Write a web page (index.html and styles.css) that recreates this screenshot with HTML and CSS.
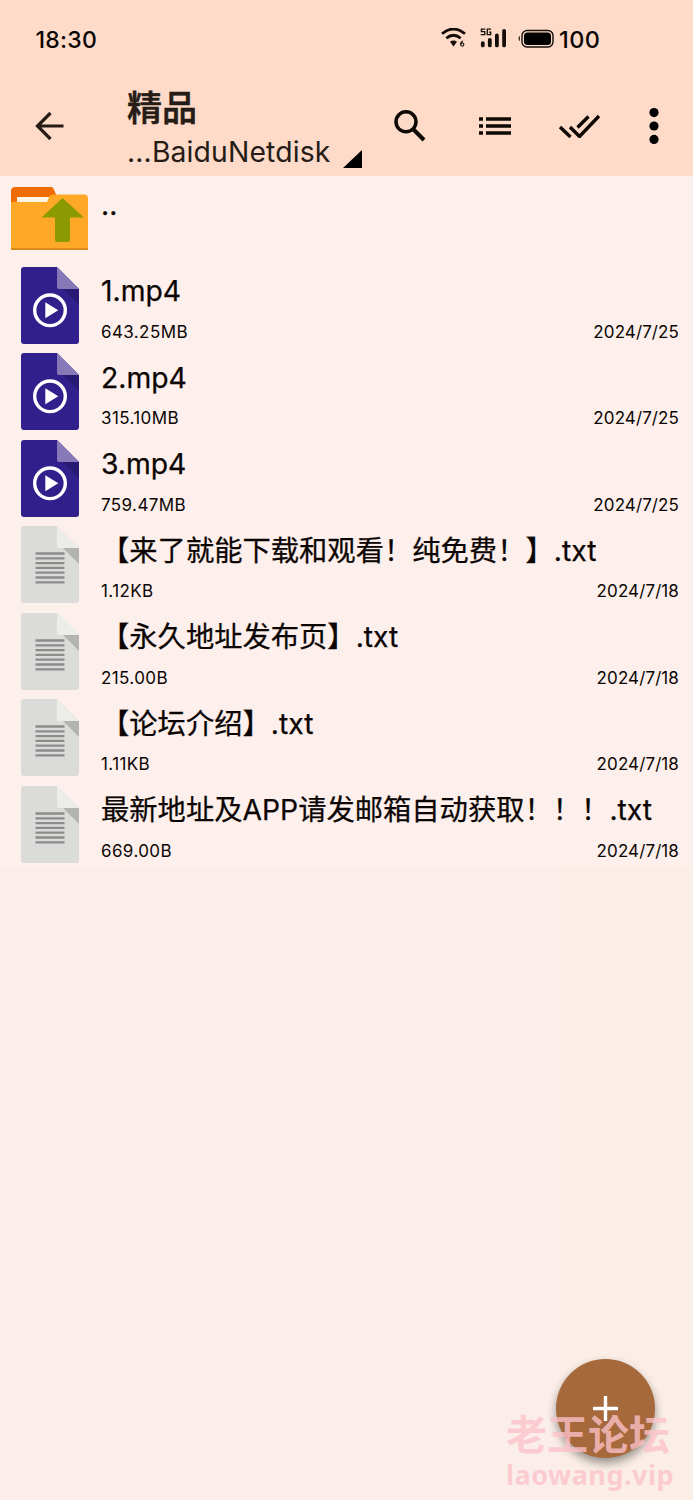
FILE: index.html
```html
<!DOCTYPE html>
<html lang="zh-CN">
<head>
<meta charset="utf-8">
<title>精品</title>
<link rel="stylesheet" href="styles.css">
</head>
<body>
<svg class="defs" width="0" height="0" aria-hidden="true">
  <symbol id="video" viewBox="0 0 58 77">
    <path fill="#311f8b" d="M3 0h33l22 22v52a3 3 0 0 1-3 3H3a3 3 0 0 1-3-3V3a3 3 0 0 1 3-3z"/>
    <path fill="#281973" d="M42 22h16v16z"/>
    <path fill="#8779b8" d="M36 0l22 22H38a2 2 0 0 1-2-2z"/>
    <circle cx="29" cy="43.300" r="15.300" fill="none" stroke="#fff" stroke-width="3.400"/>
    <path fill="#fff" d="M24.300 35.300v16l13-8z"/>
  </symbol>
  <symbol id="text" viewBox="0 0 58 77">
    <path fill="#dbdcda" d="M3 0h33l22 22v52a3 3 0 0 1-3 3H3a3 3 0 0 1-3-3V3a3 3 0 0 1 3-3z"/>
    <path fill="#b3b3b2" d="M42 22h16v16z"/>
    <path fill="#ececeb" d="M36 0l22 22H38a2 2 0 0 1-2-2z"/>
    <path stroke="#8c8c8b" stroke-width="2.300" d="M14.500 27.500h29M14.500 32.300h29M14.500 37.100h29M14.500 41.900h29M14.500 46.700h29M14.500 51.500h29M14.500 56.300h29"/>
  </symbol>
</svg>
<div class="screen">
  <header class="top">
    <div class="status">
      <span class="clock">18:30</span>
      <svg class="wifi" width="26" height="20" viewBox="0 0 26 20" fill="none" stroke="#140d08">
        <path stroke-width="2.800" d="M1 5.800Q12.500-3.800 24 5.800M5.300 10.300Q12.500 4.200 19.700 10.300"/>
        <path fill="#140d08" stroke="none" d="M9 13.800q3.500-2.400 7 0L12.500 18.500z"/>
        <path stroke-width="1.100" d="M22 13q-2.500 1-2.300 3.600"/><circle cx="21.300" cy="16.600" r="1.600" stroke-width="1.100"/>
      </svg>
      <svg class="signal" width="27" height="20" viewBox="0 0 27 20">
        <path fill="none" stroke="#140d08" stroke-width="1.300" d="M5.200 1.200H1.400v2.500h3.400v2.900H.700M11 1.200H7.300v5.400h3.400V4.100H9"/>
        <path stroke="#140d08" stroke-width="3.800" stroke-linecap="round" d="M2.800 15.200v2.200M9.800 12v5.400M16.900 7.500v9.900M24.100 3v14.400"/>
      </svg>
      <svg class="battery" width="36" height="19" viewBox="0 0 36 19">
        <path fill="#140d08" d="M1.800 7C.2 7.500.2 11.500 1.800 12z"/>
        <rect x="4" y="1.500" width="31" height="16.500" rx="5" fill="none" stroke="#140d08" stroke-width="1.400"/>
        <rect x="6" y="3.400" width="27" height="12.700" rx="3.500" fill="#000"/>
      </svg>
      <span class="level">100</span>
    </div>
    <nav class="bar">
      <svg class="back" width="30" height="30" viewBox="0 0 30 30" fill="none" stroke="#261c16" stroke-width="3.200"><path d="M29.500 15H3.500M16.500 2L3.500 15l13 13"/></svg>
      <div class="heading">
        <h1>精品</h1>
        <div class="path"><span>...BaiduNetdisk</span><svg width="19" height="18" viewBox="0 0 19 18"><path d="M19 0v18H0z"/></svg></div>
      </div>
      <div class="actions">
        <svg width="32" height="32" viewBox="0 0 32 32" fill="none" stroke="#0e0804"><circle cx="12" cy="11.800" r="10" stroke-width="3.500"/><path stroke-width="4" d="M19.500 19.500L30 30"/></svg>
        <svg width="34" height="20" viewBox="0 0 34 20" stroke="#0e0804" stroke-width="3.700" fill="none"><path d="M1 3h4M8 3h25M1 10h4M8 10h25M1 17h4M8 17h25"/></svg>
        <svg width="42" height="24" viewBox="0 0 42 24" stroke="#0e0804" stroke-width="3.400" fill="none"><path d="M2 13L12.500 23M12 13l9.500 9.500L41 2M19.500 13.500L30.500 2.500"/></svg>
        <svg width="10" height="38" viewBox="0 0 10 38"><circle cx="5" cy="5.600" r="4.600"/><circle cx="5" cy="19" r="4.600"/><circle cx="5" cy="32.400" r="4.600"/></svg>
      </div>
    </nav>
  </header>

  <main class="files">
    <div class="row up">
      <svg class="folder" width="77" height="63" viewBox="0 0 77 63">
        <path fill="#ef6c00" d="M4 0h36q2 0 2.700 2L46 10v10H0V4a4 4 0 0 1 4-4z"/>
        <path fill="#fff5e4" d="M6 10h36v10H6z"/>
        <path fill="#ffa727" d="M0 15h36l2.500-5.500q1-2 3.500-2h31a4 4 0 0 1 4 4V63H0z"/>
        <path fill="#d98b1b" d="M0 61h77v2H0z"/>
        <path fill="#8a9a00" d="M51.500 11L73 30.500H59V53q0 2-2 2H46q-2 0-2-2V30.500H30.500z"/>
      </svg>
      <div class="info"><div class="name">..</div></div>
    </div>
    <div class="row"><svg class="icon"><use href="#video"/></svg><div class="info"><div class="name">1.mp4</div><div class="meta"><span>643.25MB</span><time>2024/7/25</time></div></div></div>
    <div class="row"><svg class="icon"><use href="#video"/></svg><div class="info"><div class="name">2.mp4</div><div class="meta"><span>315.10MB</span><time>2024/7/25</time></div></div></div>
    <div class="row"><svg class="icon"><use href="#video"/></svg><div class="info"><div class="name">3.mp4</div><div class="meta"><span>759.47MB</span><time>2024/7/25</time></div></div></div>
    <div class="row"><svg class="icon"><use href="#text"/></svg><div class="info"><div class="name">【来了就能下载和观看！纯免费！】.txt</div><div class="meta"><span>1.12KB</span><time>2024/7/18</time></div></div></div>
    <div class="row"><svg class="icon"><use href="#text"/></svg><div class="info"><div class="name">【永久地址发布页】.txt</div><div class="meta"><span>215.00B</span><time>2024/7/18</time></div></div></div>
    <div class="row"><svg class="icon"><use href="#text"/></svg><div class="info"><div class="name">【论坛介绍】.txt</div><div class="meta"><span>1.11KB</span><time>2024/7/18</time></div></div></div>
    <div class="row"><svg class="icon"><use href="#text"/></svg><div class="info"><div class="name">最新地址及APP请发邮箱自动获取！！！.txt</div><div class="meta"><span>669.00B</span><time>2024/7/18</time></div></div></div>
  </main>

  <button class="fab" aria-label="添加"><svg width="25" height="25" viewBox="0 0 25 25" stroke="#fff" stroke-width="3.400"><path d="M0 12.500h25M12.500 0v25"/></svg></button>
  <div class="watermark"><div class="wm-name">老王论坛</div><div class="wm-site">laowang.vip</div></div>
</div>
</body>
</html>
```
FILE: styles.css
```css
* { box-sizing: border-box; }
body { margin: 0; font-family: Inter, "Noto Sans CJK SC", sans-serif; color: #0b0604; }
svg { display: block; flex: none; }
.defs { position: absolute; }
.screen { position: relative; height: 1500px; overflow: hidden; background: linear-gradient(90deg, #fbeeea 0 560px, #faeee6 561px); }
.top { height: 176px; background: #fedac8; }
.status { display: flex; align-items: center; height: 76px; padding-left: 35.500px; font-size: 23px; font-weight: 500; }
.clock { width: 405.500px; letter-spacing: .25px; padding-top: 3px; }
.signal { margin-left: 13px; }
.battery { margin-left: 11px; }
.level { margin-left: 5px; font-size: 23.500px; letter-spacing: .4px; padding-top: 2px; }
.bar { display: flex; height: 100px; }
.back { margin: 35px 0 0 34px; }
.heading { width: 250px; margin-left: 63px; color: #261c16; }
h1 { margin: 7px 0 0; font-size: 35px; line-height: 50px; font-weight: 500; -webkit-text-stroke: .6px; }
.path { display: flex; height: 40px; margin-top: -1px; font-size: 28.300px; line-height: 40px; letter-spacing: .15px; }
.path span { width: 215.500px; }
.path svg { margin-top: 18px; }
.actions { display: flex; align-items: center; height: 100px; margin-left: 17px; }
.actions svg:nth-child(2) { margin-left: 52px; }
.actions svg:nth-child(3) { margin-left: 46px; }
.actions svg:nth-child(4) { margin-left: 49px; }
.files { height: 691px; background: #fdefeb; }
.row { display: flex; height: 86.500px; padding: 4.300px 14px 0 20.600px; }
.up { padding: 11px 14px 0 11px; }
.folder { margin-right: 13px; }
.icon { width: 58px; height: 77px; margin-right: 22.400px; }
.info { flex: 1; min-width: 0; }
.name { font-size: 28.300px; line-height: 40px; height: 40px; margin-top: 4.400px; white-space: nowrap; -webkit-text-stroke: .25px; }
.up .name { margin-top: -2px; }
.meta { display: flex; justify-content: space-between; font-size: 17px; line-height: 24px; margin-top: 8.600px; letter-spacing: .4px; }
.meta time { letter-spacing: .1px; }
.fab { position: absolute; left: 556px; top: 1359px; width: 99px; height: 99px; padding: 0; border: 0; border-radius: 50%; background: #a6693c; display: grid; place-items: center; box-shadow: 0 5px 10px rgba(0,0,0,.4); }
.watermark { position: absolute; left: 506px; top: 1404px; color: rgba(252,194,202,.78); font-family: "Noto Sans", "Noto Sans CJK SC", sans-serif; font-weight: 700; white-space: nowrap; }
.wm-name { font-size: 41px; line-height: 60px; }
.wm-site { font-size: 27px; line-height: 22px; letter-spacing: .5px; }
```
